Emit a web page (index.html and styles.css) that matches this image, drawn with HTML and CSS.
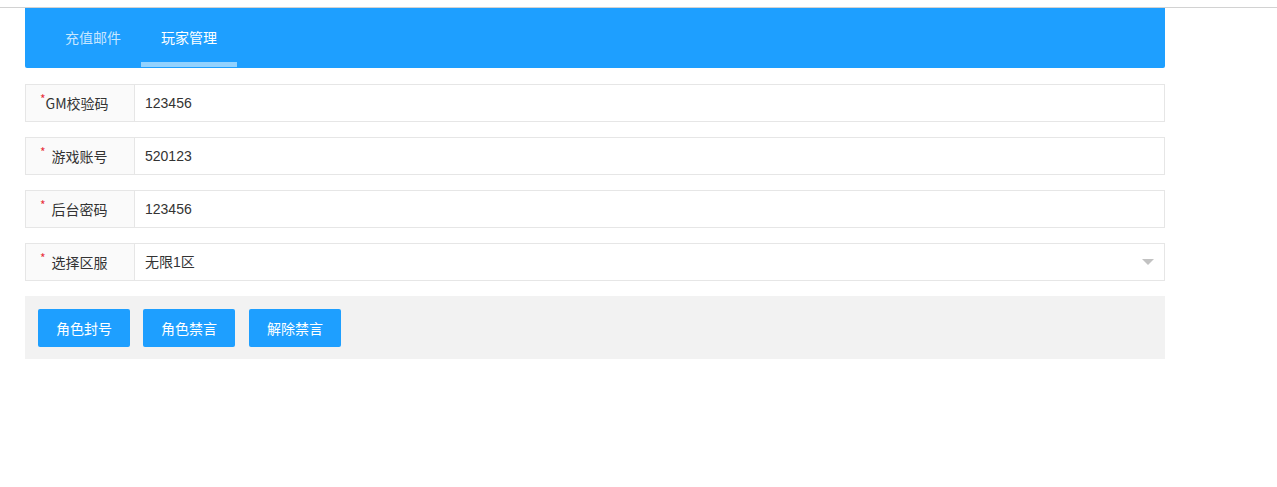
FILE: index.html
```html
<!DOCTYPE html>
<html lang="zh-CN">
<head>
<meta charset="utf-8">
<title>玩家管理</title>
<link rel="stylesheet" href="styles.css">
</head>
<body>
<div class="topline"></div>
<div class="page">
  <div class="tabs">
    <div class="tab">充值邮件</div>
    <div class="tab active">玩家管理</div>
  </div>
  <form class="form">
    <div class="row">
      <label class="label"><span class="req">*</span>GM校验码</label>
      <div class="field">123456</div>
    </div>
    <div class="row">
      <label class="label"><span class="req spaced">*</span>游戏账号</label>
      <div class="field">520123</div>
    </div>
    <div class="row">
      <label class="label"><span class="req spaced">*</span>后台密码</label>
      <div class="field">123456</div>
    </div>
    <div class="row">
      <label class="label"><span class="req spaced">*</span>选择区服</label>
      <div class="field select">无限1区<span class="arrow"></span></div>
    </div>
    <div class="actions">
      <button type="button" class="btn">角色封号</button>
      <button type="button" class="btn">角色禁言</button>
      <button type="button" class="btn">解除禁言</button>
    </div>
  </form>
</div>
</body>
</html>
```
FILE: styles.css
```css
* { box-sizing: border-box; }
body {
  margin: 0;
  font-family: "Liberation Sans", "Noto Sans CJK SC", sans-serif;
  font-size: 14px;
  color: #333;
  background: #fff;
}
.topline {
  height: 8px;
  border-bottom: 1px solid #d2d2d2;
}
.page {
  width: 1140px;
  margin-left: 25px;
}
.tabs {
  display: flex;
  height: 60px;
  padding-left: 20px;
  background: #1E9FFF;
  border-radius: 0 0 2px 2px;
}
.tab {
  position: relative;
  padding: 0 20px;
  line-height: 58px;
  color: rgba(255,255,255,0.75);
  font-family: "Noto Sans CJK SC", sans-serif;
}
.tab.active {
  color: #fff;
}
.tab.active::after {
  content: "";
  position: absolute;
  left: 0;
  right: 0;
  bottom: 1px;
  height: 5px;
  background: #92d2ff;
}
.form {
  margin-top: 16px;
}
.row {
  display: flex;
  height: 38px;
  margin-bottom: 15px;
}
.label {
  width: 110px;
  flex: none;
  border: 1px solid #e6e6e6;
  background: #fafafa;
  padding-left: 14px;
  line-height: 36px;
  font-family: "Noto Sans CJK SC", sans-serif;
  color: #333;
}
.req {
  color: #e8323c;
  font-size: 12px;
  position: relative;
  top: -5px;
}
.req.spaced {
  margin-right: 6px;
}
.field {
  position: relative;
  flex: 1;
  border: 1px solid #e6e6e6;
  border-left: none;
  padding-left: 10px;
  line-height: 36px;
  color: #333;
}
.arrow {
  position: absolute;
  right: 10px;
  top: 15px;
  width: 0;
  height: 0;
  border-left: 6px solid transparent;
  border-right: 6px solid transparent;
  border-top: 6px solid #c2c2c2;
}
.actions {
  display: flex;
  gap: 13px;
  height: 63px;
  padding: 13px;
  background: #f2f2f2;
}
.btn {
  height: 38px;
  padding: 0 18px;
  border: none;
  border-radius: 2px;
  background: #1E9FFF;
  color: #fff;
  font-size: 14px;
  font-family: "Noto Sans CJK SC", sans-serif;
  cursor: pointer;
}
.btn:last-child {
  margin-left: 1px;
}
```
